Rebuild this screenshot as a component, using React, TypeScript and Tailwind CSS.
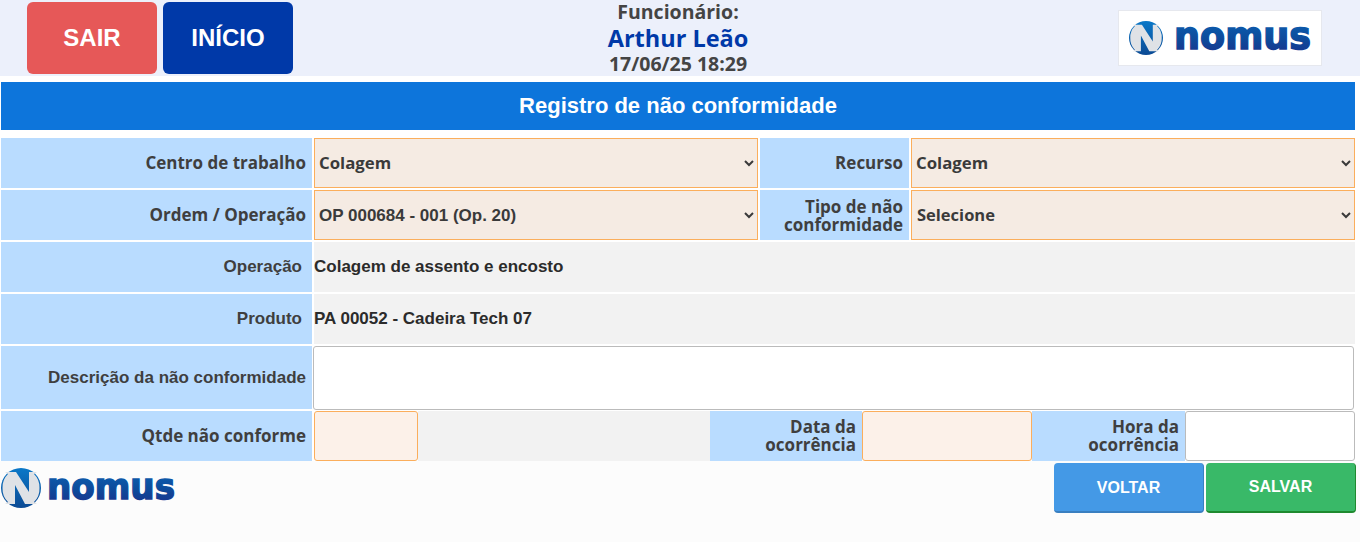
import React from "react";

function Mark({ id, cx, cy, r }: { id: string; cx: number; cy: number; r: number }) {
  const s = r / 20;
  return (
    <g transform={`translate(${cx} ${cy}) scale(${s}) translate(-20 -20)`}>
      <clipPath id={`${id}k`}>
        <path d="M0 4 H40 V36 H0 Z" />
      </clipPath>
      <circle cx="20" cy="20" r="20" fill={`url(#${id}c)`} />
      <g clipPath={`url(#${id}k)`}>
        <path d="M1.5 20 A18.5 18.5 0 0 1 7 6 L4 4 H15 L28 24 V4 H36 L33 6 A18.5 18.5 0 0 1 38.5 20 A18.5 18.5 0 0 1 33 34 L36 36 H24 L14 17 V36 H4 L7 34 A18.5 18.5 0 0 1 1.5 20 Z" fill="#dfe2e6" />
      </g>
    </g>
  );
}

function Logo({ className, id, w, h, cx, cy, r, tx, ty, tl, fs }: { className: string; id: string; w: number; h: number; cx: number; cy: number; r: number; tx: number; ty: number; tl: number; fs: number }) {
  return (
    <svg viewBox={`0 0 ${w} ${h}`} className={className}>
      <defs>
        <linearGradient id={`${id}t`} x1="0" y1="0" x2="0" y2="1">
          <stop offset="0" stopColor="#0b66b8" />
          <stop offset="0.55" stopColor="#0d4c9c" />
          <stop offset="1" stopColor="#1c2f8a" />
        </linearGradient>
        <linearGradient id={`${id}c`} x1="0" y1="0" x2="0" y2="1">
          <stop offset="0" stopColor="#0a78c8" />
          <stop offset="1" stopColor="#0b4a94" />
        </linearGradient>
      </defs>
      <Mark id={id} cx={cx} cy={cy} r={r} />
      <text x={tx} y={ty} textLength={tl} lengthAdjust="spacingAndGlyphs" fontFamily="'DejaVu Sans', sans-serif" fontWeight="700" fontSize={fs} stroke={`url(#${id}t)`} strokeWidth="1.5" fill={`url(#${id}t)`}>nomus</text>
    </svg>
  );
}

const labelBase = "flex items-center justify-end text-right bg-[#b9dcff] text-[17px] leading-[18px] font-bold text-[#3f3f3f]";
const label = `${labelBase} pr-[6px] font-['Open_Sans',sans-serif]`;
const labelArial = `${labelBase} font-['Liberation_Sans',sans-serif]`;
const sel = "h-full w-full min-w-0 rounded-none border border-[#fbae5c] bg-[#f5ebe3] font-bold text-[#3a3a3a] outline-none";
const openSel = `${sel} pb-[2px] text-[16.75px] font-['Open_Sans',sans-serif]`;
const value = "flex-1 bg-[#f2f2f2] flex items-center font-bold text-[17px] text-[#2b2b2b]";

function Sel({ text, cls }: { text: string; cls: string }) {
  return (
    <select className={cls} defaultValue={text}>
      <option>{text}</option>
    </select>
  );
}

export default function App() {
  return (
    <div className="w-[1360px] h-[542px] overflow-hidden bg-white font-['Liberation_Sans',sans-serif]">
      <header className="relative h-[76px] bg-[#ecf0fb] flex items-start">
        <div className="flex gap-[6px] pl-[27px] pt-[2px]">
          <button className="w-[130px] h-[72px] rounded-[6px] bg-[#e65858] text-white font-bold text-[24px]">SAIR</button>
          <button className="w-[130px] h-[72px] rounded-[6px] bg-[#0039a8] text-white font-bold text-[24px]">INÍCIO</button>
        </div>
        <div className="absolute left-[478px] w-[400px] top-0 text-center font-['Open_Sans',sans-serif] font-bold text-[#444]">
          <div className="text-[19.5px] leading-[24px]">Funcionário:</div>
          <div className="text-[23.5px] leading-[28px] text-[#0039a8]">Arthur Leão</div>
          <div className="text-[19.5px] leading-[24px]">17/06/25 18:29</div>
        </div>
        <div className="absolute left-[1118px] top-[10px] w-[204px] h-[56px] bg-white border border-[#e6e8ee]">
          <Logo id="a" className="w-[202px] h-[54px]" w={202} h={54} cx={27} cy={27} r={17} tx={55} ty={38} tl={137} fs={38} />
        </div>
      </header>

      <div className="h-[54px] pt-[6px] pl-[1px] w-[1355px]">
        <div className="h-[48px] pb-[2px] bg-[#0d75db] flex items-center justify-center text-white font-bold text-[22px]">Registro de não conformidade</div>
      </div>

      <main className="pt-[8px] pl-[1px] w-[1355px] flex flex-col gap-[2px]">
        <div className="flex h-[50px] gap-[2px]">
          <div className={`${label} w-[311px]`}>Centro de trabalho</div>
          <div className="w-[444px]"><Sel text="Colagem" cls={openSel} /></div>
          <div className={`${label} w-[149px]`}>Recurso</div>
          <div className="flex-1"><Sel text="Colagem" cls={openSel} /></div>
        </div>
        <div className="flex h-[50px] gap-[2px]">
          <div className={`${label} w-[311px]`}>Ordem / Operação</div>
          <div className="w-[444px]"><Sel text="OP 000684 - 001 (Op. 20)" cls={`${sel} text-[17px] font-['Liberation_Sans',sans-serif]`} /></div>
          <div className={`${label} pt-[2px] w-[149px]`}>Tipo de não conformidade</div>
          <div className="flex-1"><Sel text="Selecione" cls={`${sel} pl-[1px] pb-[2px] text-[16.5px] font-['Open_Sans',sans-serif]`} /></div>
        </div>
        <div className="flex h-[50px] gap-[2px]">
          <div className={`${labelArial} pr-[10px] w-[311px]`}>Operação</div>
          <div className={value}>Colagem de assento e encosto</div>
        </div>
        <div className="flex h-[50px] gap-[2px]">
          <div className={`${labelArial} pr-[10px] w-[311px]`}>Produto</div>
          <div className={value}>PA 00052 - Cadeira Tech 07</div>
        </div>
        <div className="flex h-[63px] gap-[1px]">
          <div className={`${labelArial} pr-[6px] w-[311px]`}>Descrição da não conformidade</div>
          <div className="flex-1 pr-[1px]"><div className="h-[64px] bg-white border border-[#bbb] rounded-[3px]" /></div>
        </div>
        <div className="flex h-[50px]">
          <div className={`${label} w-[311px] mr-[2px]`}>Qtde não conforme</div>
          <div className="w-[104px] bg-[#fcf1e9] border border-[#fbae5c] rounded-[3px]" />
          <div className="w-[292px] bg-[#f2f2f2]" />
          <div className={`${label} w-[152px]`}>Data da ocorrência</div>
          <div className="w-[170px] bg-[#fcf1e9] border border-[#fbae5c] rounded-[3px]" />
          <div className={`${label} w-[153px]`}>Hora da ocorrência</div>
          <div className="flex-1 bg-white border border-[#bbb] rounded-[3px]" />
        </div>
      </main>

      <footer className="h-[81px] bg-[#fcfcfc] flex justify-between pl-[1px] pr-[4px]">
        <Logo id="b" className="w-[176px] h-[46px] mt-[2px]" w={176} h={46} cx={20} cy={25} r={20} tx={46} ty={36} tl={128} fs={36} />
        <div className="flex gap-[2px] pt-[2px]">
          <button className="w-[150px] h-[50px] rounded-[4px] bg-[#4499e6] border-b-[2px] border-r border-[#3a7fc0] pt-[1px] text-white font-bold text-[16px]">VOLTAR</button>
          <button className="w-[150px] h-[50px] rounded-[4px] bg-[#39b968] border-b-[2px] border-r border-[#1f8a2f] text-white font-bold text-[16px]">SALVAR</button>
        </div>
      </footer>
    </div>
  );
}
